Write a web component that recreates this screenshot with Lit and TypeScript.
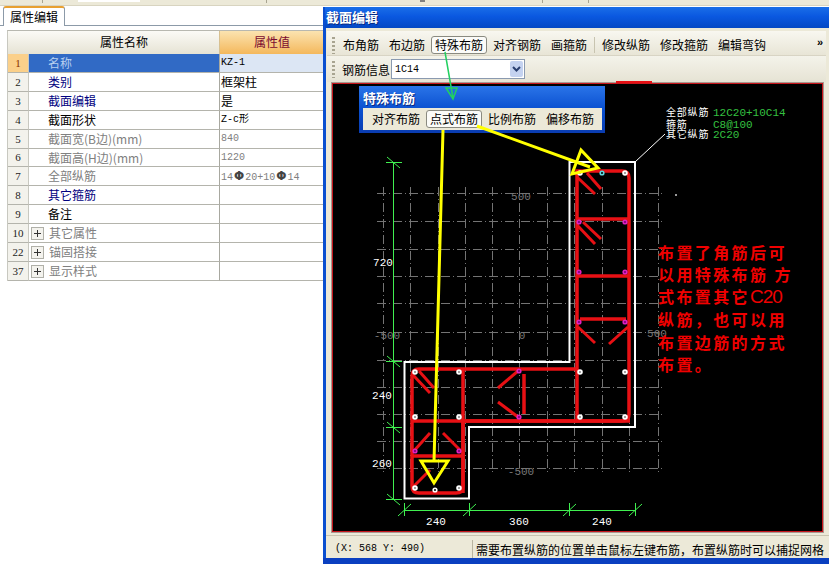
import { LitElement, html, css, svg, unsafeCSS } from "lit";
import { customElement } from "lit/decorators.js";

const CJK = `"Noto Sans CJK SC", "Liberation Sans", sans-serif`;
const RED = "#e81014";
const GREEN = "#40f050";

type Row = { n: number; name: string; value?: unknown; tone: string; plus?: boolean; short?: boolean };

const bar = html`<span class="rebar">Φ</span>`;

const rows: Row[] = [
  { n: 1, name: "名称", value: "KZ-1", tone: "sel" },
  { n: 2, name: "类别", value: "框架柱", tone: "blue" },
  { n: 3, name: "截面编辑", value: "是", tone: "blue" },
  { n: 4, name: "截面形状", value: "Z-c形", tone: "black" },
  { n: 5, name: "截面宽(B边)(mm)", value: "840", tone: "gray" },
  { n: 6, name: "截面高(H边)(mm)", value: "1220", tone: "gray", short: true },
  { n: 7, name: "全部纵筋", value: html`14${bar}20+10${bar}14`, tone: "gray" },
  { n: 8, name: "其它箍筋", tone: "blue" },
  { n: 9, name: "备注", tone: "black" },
  { n: 10, name: "其它属性", tone: "gray", plus: true },
  { n: 22, name: "锚固搭接", tone: "gray", plus: true },
  { n: 37, name: "显示样式", tone: "gray", plus: true },
];

// dashed grid of the section drawing, page coordinates
const gridX = [383, 410, 438, 465, 492, 519, 547, 574, 602, 629, 658];
const gridY = [193, 221, 249, 276, 303, 332, 360, 387, 414, 441, 468];

const whiteBars = [
  [415, 372], [459, 372], [415, 417], [459, 417], [580, 372], [625, 372],
  [580, 417], [625, 417], [415, 488], [459, 488], [625, 173], [580, 173],
];
const pinkBars = [
  [579, 222], [625, 222], [579, 272], [625, 272], [579, 322], [625, 322],
  [519, 371], [519, 417], [415, 451], [459, 451],
];

const hooks = [
  [577, 177, 595, 194], [587, 173, 601, 189],
  [577, 225, 595, 244], [583, 222, 601, 239],
  [578, 327, 595, 343], [628, 327, 609, 344],
  [413, 375, 430, 393], [419, 371, 434, 388],
  [518, 371, 498, 388], [518, 417, 498, 402],
  [413, 452, 430, 433], [460, 450, 443, 433],
  [413, 487, 430, 470],
];

const bars = [
  [577, 219, 628, 219], [577, 276, 628, 276], [580, 319, 626, 319],
  [577, 369, 577, 421], [463, 369, 463, 493], [412, 421, 630, 421],
  [412, 456, 463, 456], [524, 374, 524, 414],
];

@customElement("app-root")
export class AppRoot extends LitElement {
  static styles = css`
    :host {
      display: block;
      position: relative;
      width: 829px;
      height: 564px;
      overflow: hidden;
      background: #fff;
      font-family: ${unsafeCSS(CJK)};
      font-size: 12px;
      color: #000;
    }
    .top {
      height: 6px;
      background:
        linear-gradient(#fff, #fff) 78px 0 / 62px 2px no-repeat,
        linear-gradient(#a8a490, #a8a490) 42px 0 / 1px 3px no-repeat,
        linear-gradient(#a8a490, #a8a490) 266px 0 / 1px 3px no-repeat,
        linear-gradient(#808080, #808080) 420px 0 / 5px 2px no-repeat,
        linear-gradient(#a8a490, #a8a490) 542px 0 / 1px 3px no-repeat,
        linear-gradient(#a8a490, #a8a490) 588px 0 / 1px 3px no-repeat,
        #ece9d8;
      border-bottom: 1px solid #d8d4c0;
      box-sizing: border-box;
    }
    .main {
      display: flex;
      height: 552px;
    }

    /* left property panel */
    .props {
      width: 323px;
      flex: none;
      background: #fff;
    }
    .tabs {
      height: 20px;
      padding-left: 3px;
      border-bottom: 1px solid #8c9aa8;
      box-sizing: border-box;
    }
    .tab {
      width: 62px;
      height: 20px;
      box-sizing: border-box;
      border: 1px solid #8c9aa8;
      border-top: 2px solid #e8a030;
      border-bottom: 0;
      border-radius: 3px 3px 0 0;
      background: #fff;
      text-align: center;
      line-height: 17px;
      font-size: 12px;
    }
    .table {
      margin: 4px 0 0 7px;
      border-top: 1px solid #b8b8b0;
      border-left: 1px solid #c8c8c0;
      display: grid;
      grid-template-columns: 21px 190px 1fr;
    }
    .table > div {
      height: 19px;
      box-sizing: border-box;
      border-bottom: 1px solid #b4b4ac;
      line-height: 18px;
      white-space: nowrap;
      overflow: hidden;
    }
    .table > div.short { height: 18px; line-height: 17px; }
    .table > div.h {
      height: 23px;
      line-height: 21px;
      text-align: center;
      border-bottom: 0;
      background: linear-gradient(#fbfaf6, #e6e3d4);
    }
    .table > div.h.val {
      background: linear-gradient(#fbe3b0, #f4b85c);
      color: #7a0a30;
      border-left: 1px solid #d8c090;
    }
    .num {
      text-align: center;
      background: #f3f2ec;
      border-right: 1px solid #c8c8c0;
      font-family: "Liberation Serif", serif;
      font-size: 11px;
      color: #222;
    }
    .num.on { background: #fbd08a; color: #8a3000; }
    .name {
      padding-left: 19px;
      display: flex;
      align-items: center;
    }
    .name.plus { padding-left: 2px; gap: 5px; }
    .box {
      width: 11px;
      height: 11px;
      flex: none;
      border: 1px solid #b0b0a8;
      background: #f4f3ee;
      position: relative;
    }
    .box::before, .box::after {
      content: "";
      position: absolute;
      background: #333;
    }
    .box::before { left: 2px; right: 2px; top: 5px; height: 1px; }
    .box::after { top: 2px; bottom: 2px; left: 5px; width: 1px; }
    .val {
      padding-left: 1px;
      border-left: 1px solid #a8a8a0;
    }
    .latin {
      font-family: "Liberation Mono", ${unsafeCSS(CJK)};
      font-size: 10px;
    }
    .rebar {
      font-family: "DejaVu Sans", sans-serif;
      font-size: 12px;
      font-weight: 700;
      color: #444;
      padding: 0 1px;
    }
    .sel { background: #316ac5; color: #b8d0f0; }
    .val.on { background: #dce6f4; }
    .blue { color: #000080; }
    .gray { color: #808080; }
    .black { color: #000; }

    /* right dialog */
    .win {
      flex: 1;
      margin-top: 1px;
      display: flex;
      flex-direction: column;
      background: #ece9d8;
      border-left: 3px solid #0a4fd0;
      min-width: 0;
    }
    .title {
      height: 21px;
      flex: none;
      margin-left: -1px;
      padding-left: 1px;
      background: linear-gradient(#1a6ee8, #0a58e0 45%, #0448c4);
      color: #fff;
      font-weight: 700;
      font-size: 13px;
      line-height: 20px;
      text-shadow: 1px 1px 0 #0a2a80;
    }
    .bar {
      display: flex;
      align-items: center;
      gap: 2px;
      flex: none;
      box-sizing: border-box;
    }
    .bar.one {
      height: 25px;
      margin: 3px 3px 0 1px;
      padding: 4px 0 0 5px;
      background: linear-gradient(#f8f7f0, #e8e5d6);
      border-bottom: 1px solid #d8d4c4;
      position: relative;
    }
    .bar.two {
      height: 26px;
      margin: 0 3px 0 1px;
      padding-left: 5px;
      background: linear-gradient(#f4f3ea, #e6e3d4);
    }
    .grip {
      width: 3px;
      height: 17px;
      margin-right: 2px;
      background: repeating-linear-gradient(#a8a490 0 2px, transparent 2px 4px);
    }
    .btn {
      height: 16px;
      line-height: 16px;
      padding: 0 3px;
      border: 1px solid transparent;
      white-space: nowrap;
    }
    .btn.on {
      border-color: #8a8a80;
      border-radius: 3px;
      background: #fbfbf8;
    }
    .sep {
      width: 1px;
      height: 16px;
      background: #c8c4b0;
      margin: 0 1px 0 1px;
    }
    .more {
      position: absolute;
      right: 3px;
      top: 5px;
      font-size: 11px;
      font-weight: 700;
      font-family: "Liberation Sans", sans-serif;
    }
    .info { margin: 0 -1px 0 3px; }
    .combo {
      width: 134px;
      height: 20px;
      box-sizing: border-box;
      border: 1px solid #8a9ab0;
      background: #fff;
      display: flex;
      align-items: center;
      justify-content: space-between;
      padding: 0 1px 0 3px;
      font-family: "Liberation Mono", monospace;
      font-size: 10px;
    }
    .drop {
      width: 13px;
      height: 16px;
      background: #c4d2f0;
      border-radius: 2px;
      display: flex;
      align-items: center;
      justify-content: center;
    }
    .canvas {
      flex: 1;
      min-height: 0;
      margin: 0 5px 2px 5px;
      box-sizing: border-box;
      background: #000;
      border: 2px solid #c8161c;
      outline: 1px solid #a89890;
      outline-offset: -1px;
      overflow: hidden;
    }
    .canvas svg { display: block; }
    .status {
      height: 23px;
      flex: none;
      box-sizing: border-box;
      padding-top: 4px;
      display: flex;
      align-items: center;
      white-space: nowrap;
      overflow: hidden;
      border-top: 1px solid #c8c4b0;
    }
    .coord {
      width: 147px;
      flex: none;
      padding-left: 9px;
      box-sizing: border-box;
      font-family: "Liberation Mono", monospace;
      font-size: 10px;
      border-right: 1px solid #b8b4a0;
      line-height: 18px;
    }
    .msg { padding-left: 3px; }
    .bottom {
      position: absolute;
      left: 323px;
      right: 0;
      top: 558px;
      bottom: 0;
      background: #0a3fc0;
    }

    /* floating tool window */
    .float {
      position: absolute;
      left: 359px;
      top: 86px;
      width: 246px;
      height: 47px;
      box-sizing: border-box;
      background: linear-gradient(#2a74e8, #0a50d0 50%, #0a3cb0);
      padding: 0 3px 3px 4px;
    }
    .float .cap {
      height: 22px;
      color: #fff;
      font-weight: 700;
      font-size: 13px;
      line-height: 23px;
      text-shadow: 1px 1px 0 #0a2a80;
    }
    .float .bar {
      height: 22px;
      padding-left: 5px;
      background: #ece9d8;
    }

    .overlay {
      position: absolute;
      left: 0;
      top: 0;
      pointer-events: none;
    }
  `;

  renderRow(r: Row) {
    const nameCls = `name ${r.tone} ${r.plus ? "plus" : ""} ${r.short ? "short" : ""}`;
    const isSel = r.tone === "sel";
    const valCls = `val ${isSel ? "on" : ""} ${r.short ? "short" : ""} ${
      r.n >= 5 && r.n <= 7 ? "gray" : ""
    } ${r.n === 1 || r.n === 4 || (r.n >= 5 && r.n <= 7) ? "latin" : ""}`;
    return html`
      <div class="num ${isSel ? "on" : ""} ${r.short ? "short" : ""}">${r.n}</div>
      <div class=${nameCls}>
        ${r.plus ? html`<span class="box"></span>` : ""}${r.name}
      </div>
      <div class=${valCls}>${r.value ?? ""}</div>
    `;
  }

  renderDrawing() {
    const label = (x: number, y: number, t: string, fill = "#fff", anchor = "middle") =>
      svg`<text x=${x} y=${y} fill=${fill} text-anchor=${anchor} font-family="Liberation Mono, monospace" font-size="11">${t}</text>`;
    return html`<svg width="489" height="447" viewBox="333 84 489 447">
      ${gridX.map(
        (x) => svg`<line x1=${x + 0.5} x2=${x + 0.5} y1="187" y2="474" stroke="#747474" stroke-dasharray="9 3 1 3"/>`
      )}
      ${gridY.map(
        (y) => svg`<line x1="377" x2="664" y1=${y + 0.5} y2=${y + 0.5} stroke="#747474" stroke-dasharray="9 3 1 3"/>`
      )}
      ${label(521, 200, "500", "#777")} ${label(387, 339, "-500", "#777")}
      ${label(522, 339, "0", "#777")} ${label(657, 337, "500", "#777")}
      ${label(521, 475, "-500", "#777")}

      <path d="M393.5 162V499M404 510.5H635" stroke=${GREEN} fill="none" />
      ${[162, 361, 427, 499].map(
        (y) => svg`<path d="M386 ${y + 0.5}H402M387 ${y - 5}L400 ${y + 6}" stroke=${GREEN} fill="none"/>`
      )}
      ${[404, 469, 569, 635].map(
        (x) => svg`<path d="M${x + 0.5} 503V516M${x - 6} 516L${x + 7} 504" stroke=${GREEN} fill="none"/>`
      )}
      ${label(383, 266, "720")} ${label(382, 399, "240")} ${label(382, 467, "260")}
      ${label(436, 525, "240")} ${label(519, 525, "360")} ${label(602, 525, "240")}

      <path
        d="M569.5 162H635V427H469V498.5H404.5V362H569.5Z"
        fill="none"
        stroke="#fff"
        stroke-width="2"
      />
      <path d="M635 162L665 134" stroke="#fff" fill="none" />

      <path
        d="M577 369V171H622Q629 171 629 178V414Q629 421 622 421H463V486Q463 493 456 493H419Q412 493 412 486V376Q412 369 419 369Z"
        fill="none"
        stroke=${RED}
        stroke-width="3.5"
      />
      ${bars.map(
        (b) =>
          svg`<line x1=${b[0]} y1=${b[1]} x2=${b[2]} y2=${b[3]} stroke=${RED} stroke-width="3.5"/>`
      )}
      ${hooks.map(
        (b) =>
          svg`<line x1=${b[0]} y1=${b[1]} x2=${b[2]} y2=${b[3]} stroke=${RED} stroke-width="3"/>`
      )}
      ${whiteBars.map(
        (p) => svg`<circle cx=${p[0]} cy=${p[1]} r="1.8" fill="#222" stroke="#fff" stroke-width="2"/>`
      )}
      ${pinkBars.map(
        (p) => svg`<circle cx=${p[0]} cy=${p[1]} r="1.8" fill="#700070" stroke="#e020c0" stroke-width="1.6"/>`
      )}
      <circle cx="602" cy="173" r="1.8" fill="#000" stroke="#60d8e0" stroke-width="1.6" />
      <circle cx="435" cy="490" r="1.8" fill="#000" stroke="#fff" stroke-width="1.6" />
      <circle cx="676" cy="195" r="1" fill="#ccc" />

      <g font-family=${CJK} font-size="10" fill="#fff" letter-spacing="0.8">
        <text x="666" y="116">全部纵筋</text>
        <text x="666" y="127.5">箍筋</text>
        <text x="666" y="138">其它纵筋</text>
      </g>
      ${label(713, 116, "12C20+10C14", "#35c040", "start")}
      ${label(713, 127.5, "C8@100", "#35c040", "start")}
      ${label(713, 138, "2C20", "#35c040", "start")}

      <g font-family=${CJK} font-size="16" font-weight="700" fill="#f00000" letter-spacing="2.4">
        <text x="658" y="259">布置了角筋后可</text>
        <text x="658" y="281">以用特殊布筋 方</text>
        <text x="658" y="303">式布置其它<tspan letter-spacing="-1" font-size="19" font-weight="400" font-family="Liberation Sans, sans-serif">C20</tspan></text>
        <text x="658" y="326">纵筋，也可以用</text>
        <text x="658" y="349">布置边筋的方式</text>
        <text x="658" y="371">布置。</text>
      </g>
    </svg>`;
  }

  render() {
    return html`
      <div class="top"></div>
      <div class="main">
        <section class="props">
          <div class="tabs"><div class="tab">属性编辑</div></div>
          <div class="table">
            <div class="h"></div>
            <div class="h">属性名称</div>
            <div class="h val">属性值</div>
            ${rows.map((r) => this.renderRow(r))}
          </div>
        </section>

        <section class="win">
          <div class="title">截面编辑</div>
          <div class="bar one">
            <span class="grip"></span>
            <span class="btn">布角筋</span>
            <span class="btn">布边筋</span>
            <span class="btn on">特殊布筋</span>
            <span class="btn">对齐钢筋</span>
            <span class="btn">画箍筋</span>
            <span class="sep"></span>
            <span class="btn">修改纵筋</span>
            <span class="btn">修改箍筋</span>
            <span class="btn">编辑弯钩</span>
            <span class="more">»</span>
          </div>
          <div class="bar two">
            <span class="grip"></span>
            <span class="info">钢筋信息</span>
            <div class="combo">
              1C14
              <span class="drop">
                <svg width="9" height="6" viewBox="0 0 9 6">
                  <path d="M1 1l3.5 3.5L8 1" fill="none" stroke="#2a3f70" stroke-width="2" />
                </svg>
              </span>
            </div>
          </div>
          <div class="canvas">${this.renderDrawing()}</div>
          <div class="status">
            <span class="coord">(X: 568 Y: 490)</span>
            <span class="msg">需要布置纵筋的位置单击鼠标左键布筋，布置纵筋时可以捕捉网格</span>
          </div>
        </section>
      </div>
      <div class="bottom"></div>

      <div class="float">
        <div class="cap">特殊布筋</div>
        <div class="bar">
          <span class="btn">对齐布筋</span>
          <span class="btn on">点式布筋</span>
          <span class="btn">比例布筋</span>
          <span class="btn">偏移布筋</span>
        </div>
      </div>

      <svg class="overlay" width="829" height="564" viewBox="0 0 829 564" fill="none">
        <rect x="616" y="81" width="36" height="2" fill="#e81014" />
        <path d="M445 52L453 98M446 88L453 99L457 88Z" stroke="#22d060" stroke-width="1.5" />
        <path d="M443 130L434 462M477 126L590 167" stroke="#ffff00" stroke-width="3" />
        <path d="M421 461H448L434 483Z" stroke="#ffff00" stroke-width="3" />
        <path d="M581 150L572 174L598 168Z" stroke="#ffff00" stroke-width="3" />
      </svg>
    `;
  }
}
